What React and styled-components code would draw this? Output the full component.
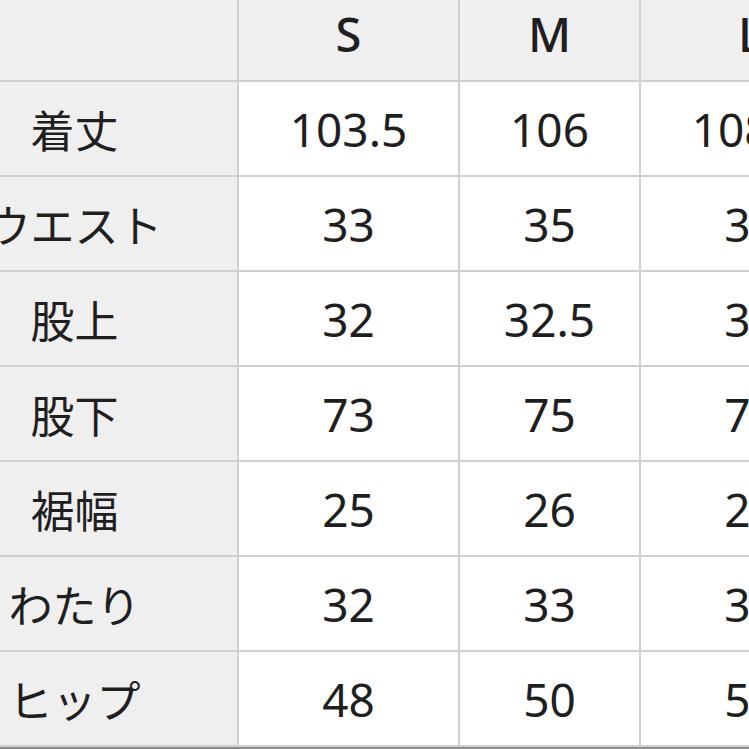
import React from "react";
import styled, { createGlobalStyle } from "styled-components";

const sizes = ["S", "M", "L"];

const rows = [
  { label: "着丈", values: ["103.5", "106", "108.5"] },
  { label: "ウエスト", values: ["33", "35", "37"] },
  { label: "股上", values: ["32", "32.5", "33"] },
  { label: "股下", values: ["73", "75", "77"] },
  { label: "裾幅", values: ["25", "26", "27"] },
  { label: "わたり", values: ["32", "33", "34"] },
  { label: "ヒップ", values: ["48", "50", "52"] },
];

const GlobalStyle = createGlobalStyle`
  html, body {
    margin: 0;
    padding: 0;
    background: #ffffff;
    overflow: hidden;
  }
  body {
    font-family: "Noto Sans", "Noto Sans CJK JP", sans-serif;
    color: #1f1f1f;
  }
`;

const Viewport = styled.div`
  width: 749px;
  height: 749px;
  overflow: hidden;
`;

/* table is a crop: it starts left of and above the window */
const Table = styled.div`
  display: grid;
  grid-template-columns: 333px 219px 179px 219px;
  grid-auto-rows: 93px;
  gap: 2px;
  background: #cfcfcf;
  margin: -13px 0 0 -96px;
  width: max-content;
  padding-bottom: 2px;
  border-bottom: 2px solid #8c8c8c;
`;

const Cell = styled.div`
  display: flex;
  align-items: center;
  justify-content: center;
  background: ${(p) => (p.$shaded ? "#efefef" : "#ffffff")};
  font-size: ${(p) => (p.$head ? "47px" : "46px")};
  font-weight: ${(p) => (p.$head ? 500 : 400)};
  white-space: nowrap;
`;

const Label = styled(Cell)`
  font-family: "Noto Sans CJK JP", sans-serif;
  font-size: 44px;
  padding-left: 8px;
`;

export default function App() {
  return (
    <Viewport>
      <GlobalStyle />
      <Table>
        <Cell $shaded $head />
        {sizes.map((s) => (
          <Cell key={s} $shaded $head>
            {s}
          </Cell>
        ))}
        {rows.map((r) => (
          <React.Fragment key={r.label}>
            <Label $shaded>{r.label}</Label>
            {r.values.map((v, i) => (
              <Cell key={i}>{v}</Cell>
            ))}
          </React.Fragment>
        ))}
      </Table>
    </Viewport>
  );
}
